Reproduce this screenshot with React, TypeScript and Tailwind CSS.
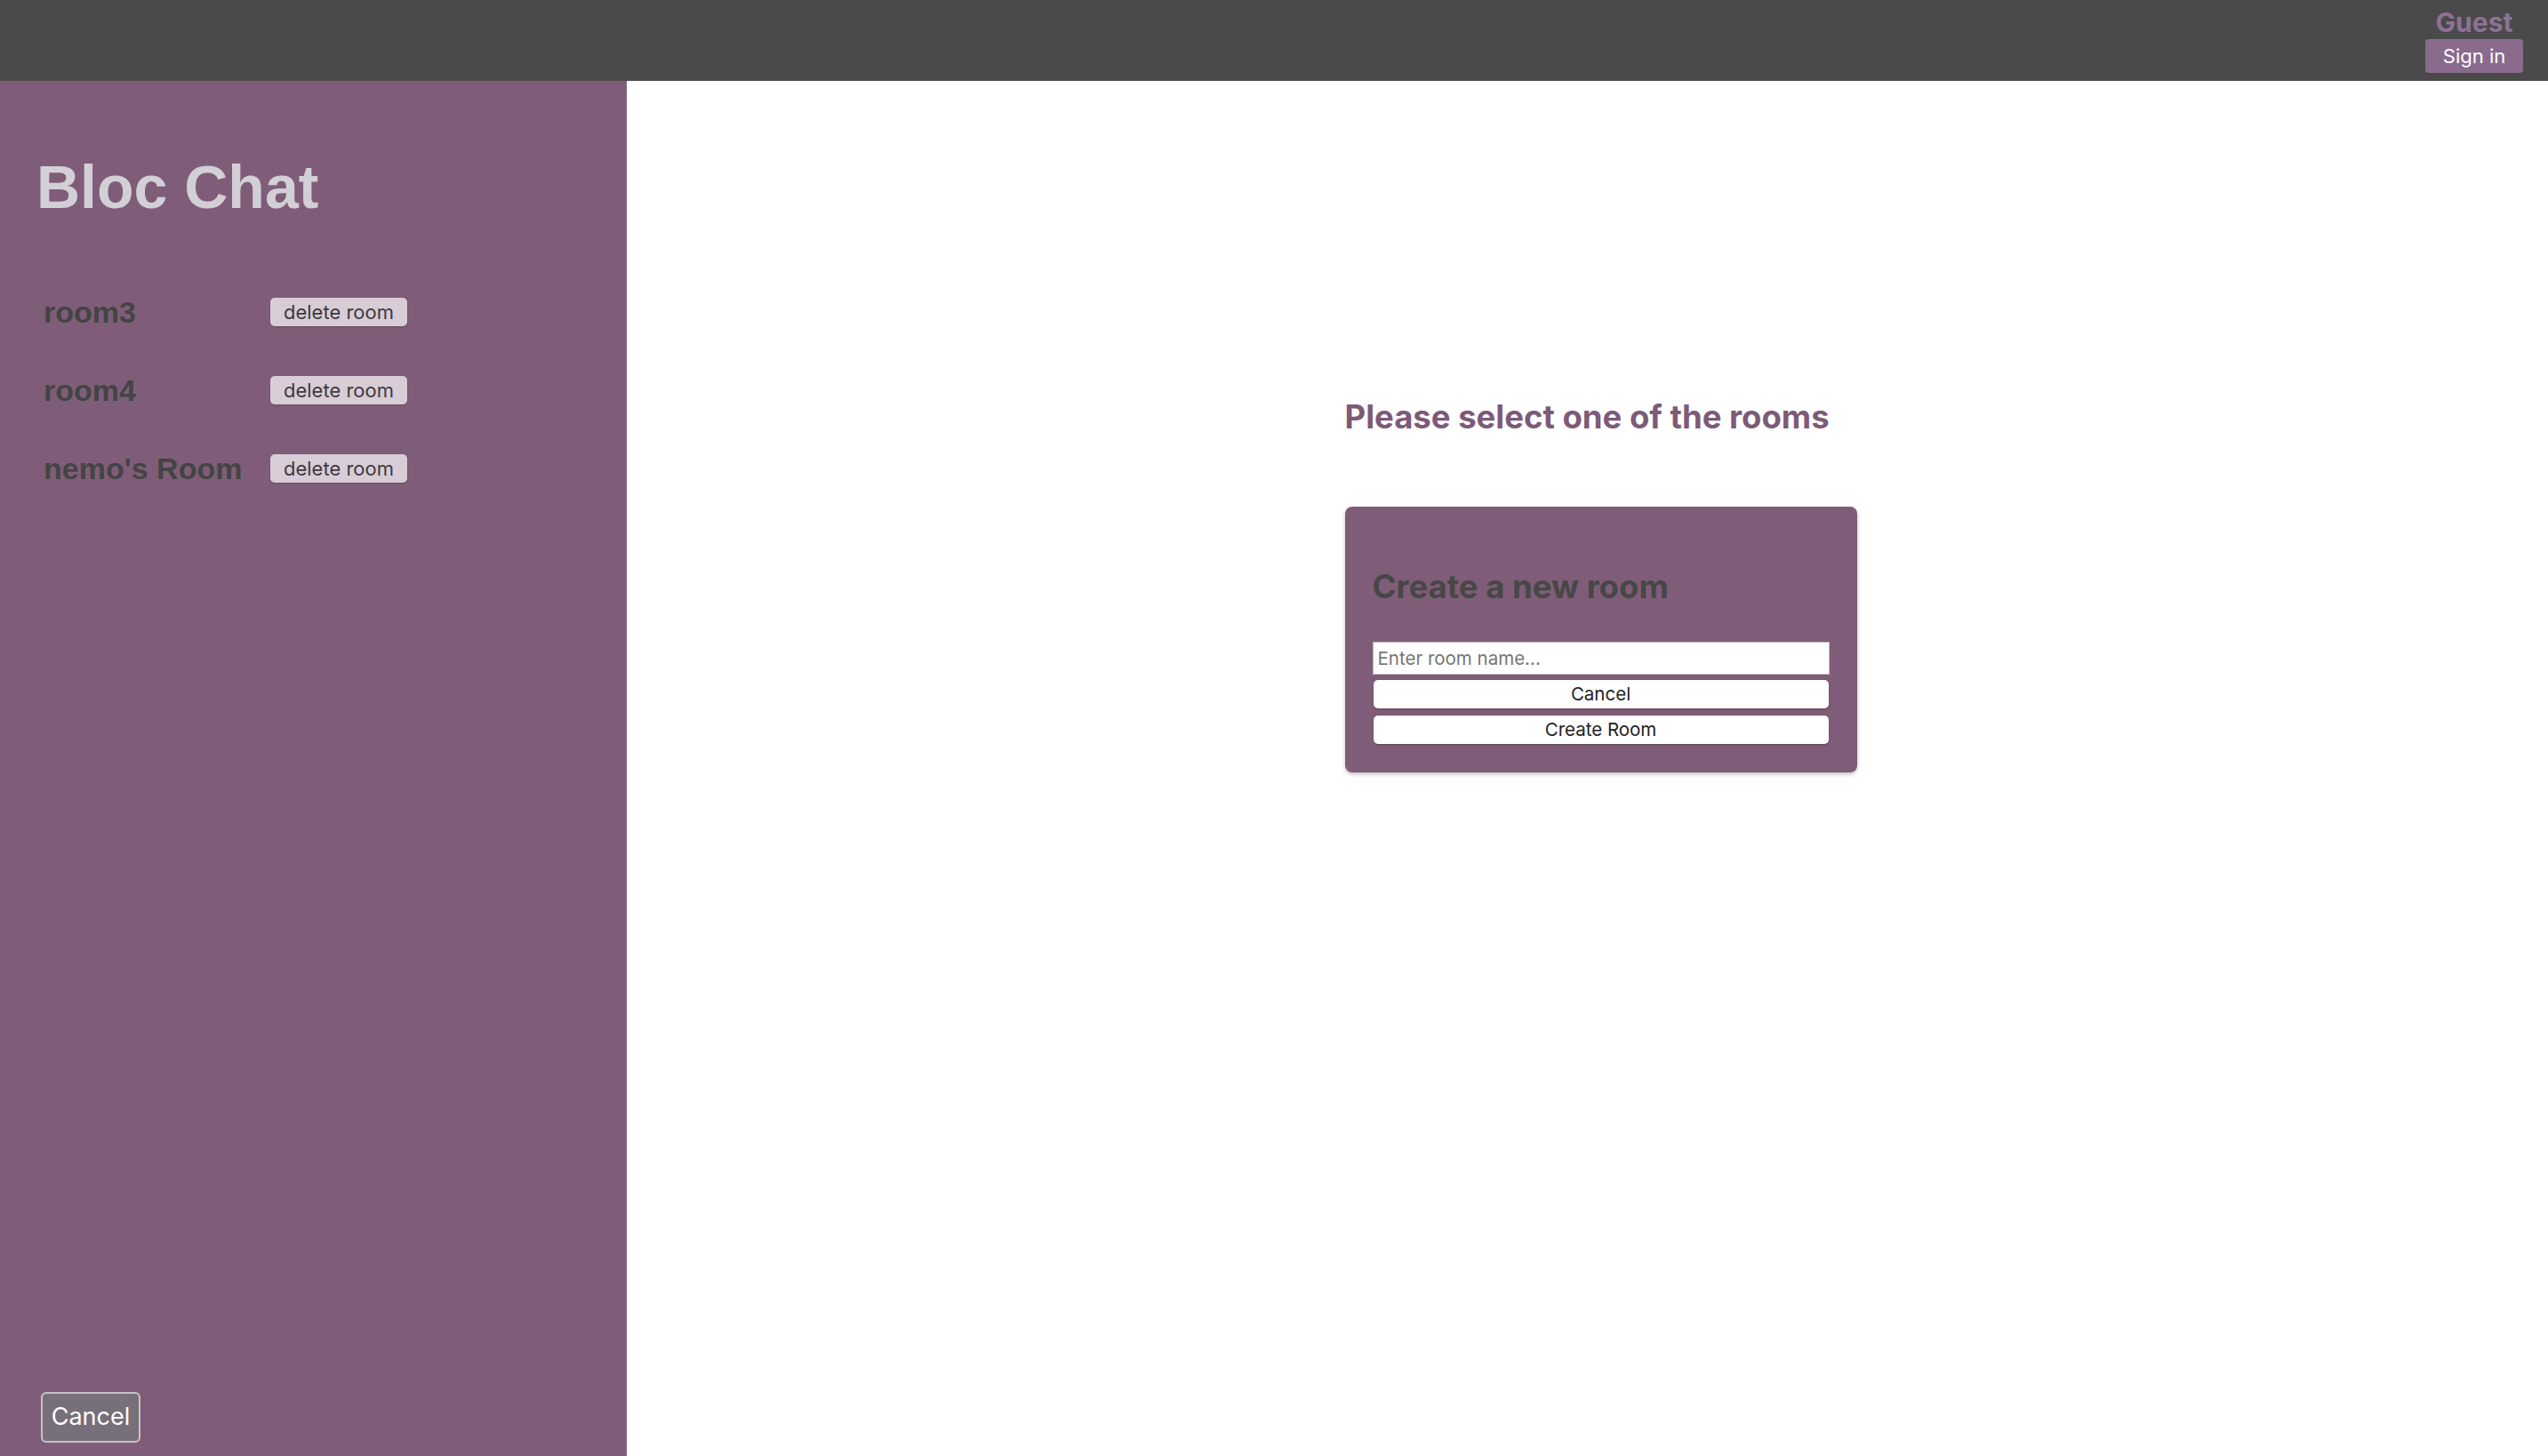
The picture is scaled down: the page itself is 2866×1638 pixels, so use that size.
const rooms = ['room3', 'room4', "nemo's Room"]

function Header() {
  return (
    <header className="flex h-[91px] shrink-0 justify-end bg-[#4a4a4a] pr-[28px]">
      <div className="flex flex-col items-center pt-[10px]">
        <span className="text-[30px] leading-[30px] font-bold text-[#8e7194]">Guest</span>
        <button className="mt-[4px] h-[38px] w-[110px] rounded-[4px] bg-[#8a6b8e] text-[22px] text-white">
          Sign in
        </button>
      </div>
    </header>
  )
}

function Sidebar() {
  return (
    <aside className="flex w-[705px] shrink-0 flex-col bg-[#7f5d78]">
      <h1 className="pt-[81px] pl-[41px] font-['Liberation_Sans',Arial,sans-serif] text-[68px] leading-[76px] font-bold text-[#d3cfd6]">
        Bloc Chat
      </h1>
      <ul className="mt-[59px] pl-[49px]">
        {rooms.map((room) => (
          <li key={room} className="flex h-[88px] items-center">
            <span className="w-[255px] font-['Liberation_Sans',Arial,sans-serif] text-[34px] leading-[38px] font-bold text-[#444]">
              {room}
            </span>
            <button className="h-[32px] w-[154px] rounded-[5px] bg-[#d8ccd7] text-[22px] text-[#3d3a3e] shadow-[0_1px_2px_rgba(0,0,0,0.2)]">
              delete room
            </button>
          </li>
        ))}
      </ul>
      {/* cancel sits at the foot of the sidebar */}
      <div className="mt-auto pb-[15px] pl-[46px]">
        <button className="h-[57px] w-[112px] rounded-[6px] border-2 border-[#c9c1c9] bg-[#776f79] text-[27px] text-white">
          Cancel
        </button>
      </div>
    </aside>
  )
}

function NewRoomCard() {
  return (
    <div className="w-[576px] rounded-[8px] bg-[#7f5d78] px-[31px] pt-[69px] pb-[32px] shadow-[0_2px_4px_rgba(0,0,0,0.25)]">
      <h2 className="text-[36.5px] leading-[42px] font-bold text-[#474747]">Create a new room</h2>
      <input
        type="text"
        placeholder="Enter room name..."
        className="mt-[41px] block h-[37px] w-full border border-[#bdbdbd] bg-white px-[5px] text-[20.5px] text-[#222] placeholder:text-[#767676]"
      />
      <div className="mt-[6px] flex flex-col gap-[8px] px-px">
        <button className="h-[32px] w-full rounded-[5px] bg-white text-[20.5px] text-[#222] shadow-[0_1px_2px_rgba(0,0,0,0.3)]">
          Cancel
        </button>
        <button className="h-[32px] w-full rounded-[5px] bg-white text-[20.5px] text-[#222] shadow-[0_1px_2px_rgba(0,0,0,0.3)]">
          Create Room
        </button>
      </div>
    </div>
  )
}

export default function App() {
  return (
    <div className="flex h-[1638px] w-full flex-col overflow-hidden bg-white font-['Inter',sans-serif]">
      <Header />
      <div className="flex min-h-0 flex-1">
        <Sidebar />
        <main className="flex flex-1 flex-col items-center pt-[357px]">
          <div className="w-[546px]">
            <h2 className="text-[36.5px] leading-[42px] font-bold whitespace-nowrap text-[#7d5a78]">
              Please select one of the rooms
            </h2>
            <div className="mt-[80px]">
              <NewRoomCard />
            </div>
          </div>
        </main>
      </div>
    </div>
  )
}
